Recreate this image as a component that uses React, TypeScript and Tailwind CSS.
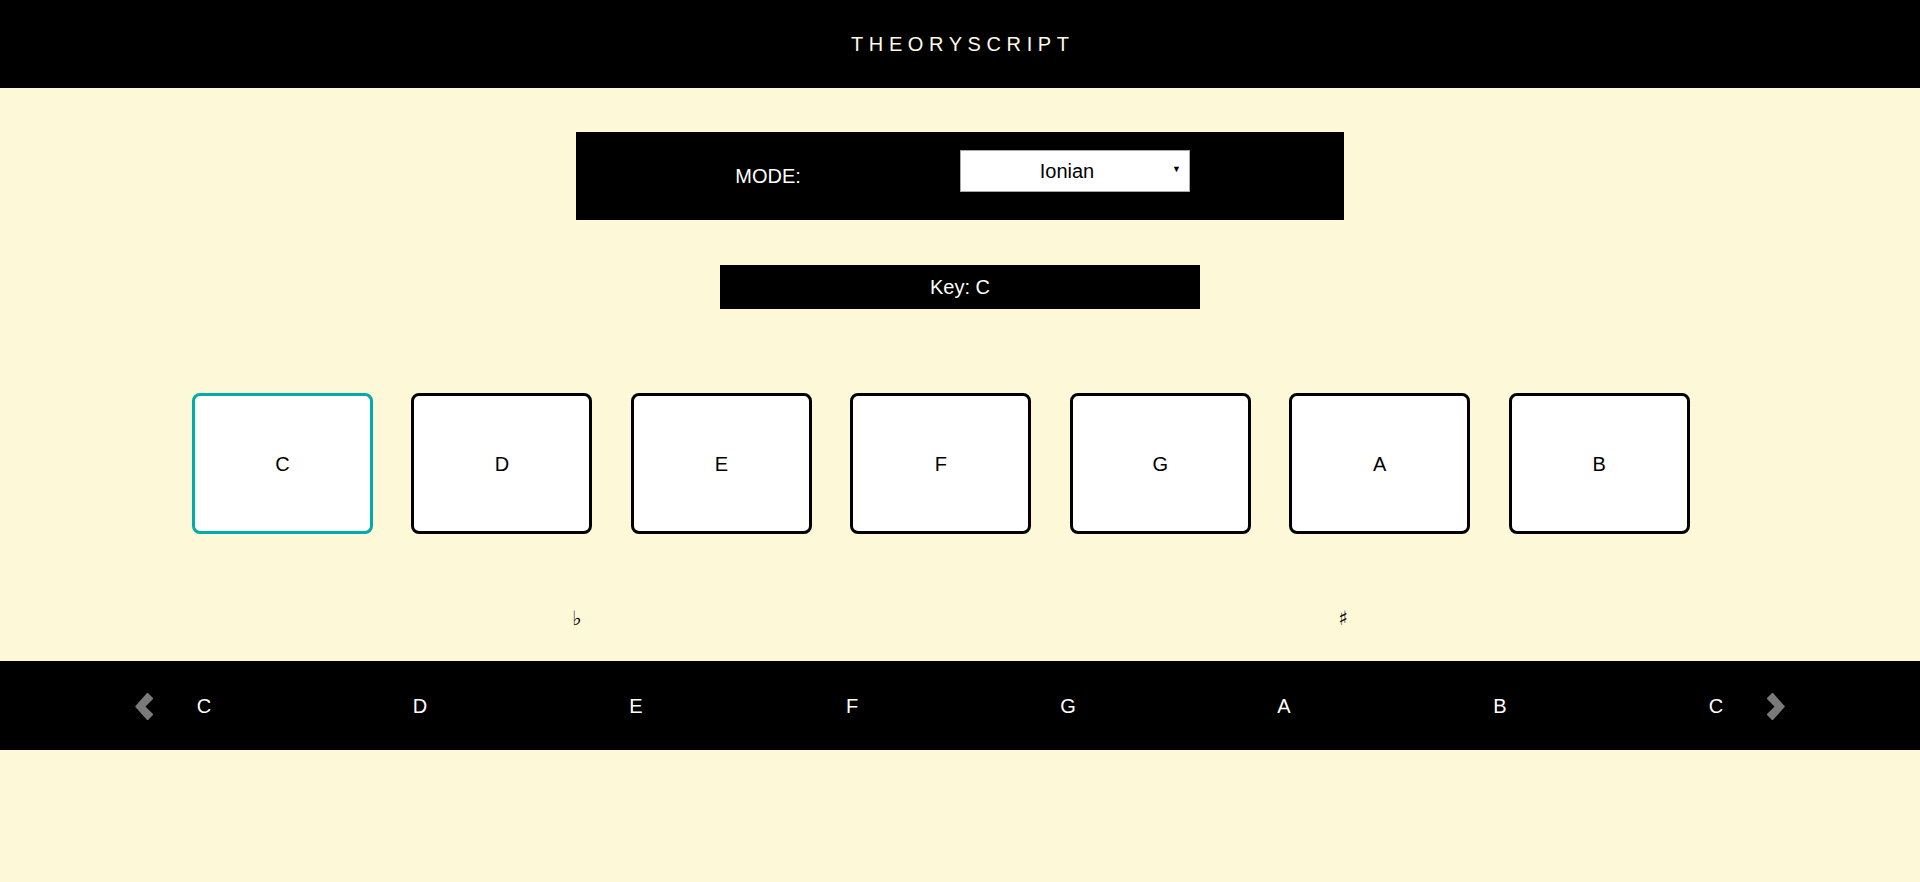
import React from 'react';

const SCALE = ['C', 'D', 'E', 'F', 'G', 'A', 'B'];
const RUN = ['C', 'D', 'E', 'F', 'G', 'A', 'B', 'C'];

const Chevron: React.FC<{ dir: 'left' | 'right'; className: string }> = ({ dir, className }) => (
  <svg viewBox="0 0 18 29" className={className} aria-hidden>
    <polygon
      points={
        dir === 'left'
          ? '0,14.5 12,1 13,1 18,6 18,7 10.5,14.5 18,22 18,23 13,28 12,28'
          : '18,14.5 6,1 5,1 0,6 0,7 7.5,14.5 0,22 0,23 5,28 6,28'
      }
      fill="#7a7a7a"
    />
  </svg>
);

const App: React.FC = () => {
  const selected = 0;

  return (
    <div className="min-h-[882px] bg-[#fdf9d8] font-['Liberation_Sans',Arial,sans-serif]">
      <header className="h-[88px] bg-black flex items-center justify-center">
        <h1 className="text-[20px] tracking-[0.28em] pl-[0.28em] text-[#fffbe8]">THEORYSCRIPT</h1>
      </header>

      <div className="mt-[44px] mx-auto w-[768px] h-[88px] bg-black grid grid-cols-2">
        <div className="flex items-center justify-center text-white text-[20px]">MODE:</div>
        <div className="pt-[18px]">
          <div className="relative w-[230px] h-[42px] bg-white border border-[#a9a9a9] flex items-center justify-center pr-[16px] text-[20px] text-black">
            Ionian
            <span className="absolute right-[8px] top-[14px] text-[9px] leading-none">▼</span>
          </div>
        </div>
      </div>

      <div className="mt-[45px] mx-auto w-[480px] h-[44px] bg-black flex items-center justify-center text-white text-[20px]">
        Key: C
      </div>

      <div className="mt-[84px] mx-auto w-[1536px] grid grid-cols-7">
        {SCALE.map((n, i) => (
          <div
            key={n}
            className={
              i === selected
                ? 'w-[181px] h-[141px] bg-white border-[3px] border-[#00abab] rounded-[8px] flex items-center justify-center text-[20px] text-black'
                : 'w-[181px] h-[141px] bg-white border-[3px] border-black rounded-[8px] flex items-center justify-center text-[20px] text-black'
            }
          >
            {n}
          </div>
        ))}
      </div>

      <div className="h-[127px] pt-[72px]">
        <div className="mx-auto w-[776px] flex justify-between text-[20px] leading-[24px] text-black font-['DejaVu_Sans',sans-serif]">
          <span>♭</span>
          <span>♯</span>
        </div>
      </div>

      <nav className="relative h-[89px] bg-black">
        <Chevron dir="left" className="absolute left-[135px] top-[31px] w-[18px] h-[29px]" />
        <div className="mx-auto w-[1728px] h-full grid grid-cols-8 items-center">
          {RUN.map((n, i) => (
            <div key={i} className="text-center text-white text-[20px]">
              {n}
            </div>
          ))}
        </div>
        <Chevron dir="right" className="absolute left-[1767px] top-[31px] w-[18px] h-[29px]" />
      </nav>
    </div>
  );
};

export default App;
